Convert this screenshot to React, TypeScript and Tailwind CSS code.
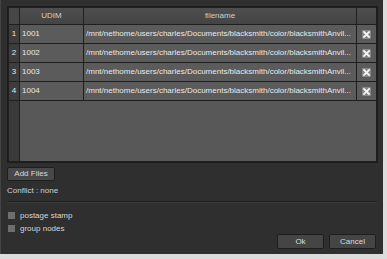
const rows = ["1001", "1002", "1003", "1004"];
const path = "/mnt/nethome/users/charles/Documents/blacksmith/color/blacksmithAnvil...";

function RemoveIcon() {
  return (
    <svg width="9" height="9" viewBox="0 0 9 9">
      <rect x="0" y="0" width="9" height="9" rx="1" fill="#858585" />
      <path d="M2 2 L7 7 M7 2 L2 7" stroke="#f4f4f4" strokeWidth="1.8" strokeLinecap="square" />
    </svg>
  );
}

export default function App() {
  return (
    <div
      className="w-[387px] h-[259px] bg-[#dcdcdc] overflow-hidden text-[8px] text-[#d6d6d6]"
      style={{ fontFamily: '"Liberation Sans", Arial, sans-serif' }}
    >
      <div className="w-[383px] h-[254px] bg-[#2f2f2f] border-l border-[#444] flex flex-col px-[6px] pt-[6px]">
        {/* table */}
        <div className="w-[371px] h-[157px] border border-[#1c1c1c] bg-[#1f1f1f] flex flex-col p-px gap-px">
          <div className="flex h-[16px] gap-px">
            <div className="w-[10px] bg-[#474747]" />
            <div className="w-[63px] bg-gradient-to-b from-[#4e4e4e] to-[#444] flex items-center justify-center text-[#cfcfcf]">UDIM</div>
            <div className="flex-1 bg-gradient-to-b from-[#4e4e4e] to-[#444] flex items-center justify-center text-[#cfcfcf]">filename</div>
            <div className="w-[19px] bg-gradient-to-b from-[#4e4e4e] to-[#444]" />
          </div>
          {rows.map((u, i) => (
            <div key={u} className="flex h-[18px] gap-px">
              <div className="w-[10px] bg-[#3d3d3d] flex items-center justify-center text-[#e6e6e6]">{i + 1}</div>
              <div className="w-[63px] bg-[#5b5b5b] flex items-center pl-[2px] text-[#e8e8e8]">{u}</div>
              <div className="flex-1 min-w-0 bg-[#5b5b5b] flex items-center pl-[2px] text-[#e8e8e8] whitespace-nowrap">
                {path}
              </div>
              <div className="w-[19px] bg-[#5b5b5b] flex items-center justify-center">
                <RemoveIcon />
              </div>
            </div>
          ))}
          <div className="flex flex-1 gap-px">
            <div className="w-[10px] bg-[#3a3a3a]" />
            <div className="flex-1 bg-[#585858]" />
          </div>
        </div>

        <button className="mt-[4px] w-[48px] h-[14px] bg-[#484848] border border-[#1e1e1e] rounded-[2px] text-[#d8d8d8] flex items-center justify-center">
          Add Files
        </button>
        <div className="mt-[4px] h-[11px] flex items-center text-[#d0d0d0]">Conflict : none</div>
        <div className="mt-[5px] w-[370px] border-t border-[#1e1e1e] border-b-[#3a3a3a] border-b" />

        <div className="mt-[8px] flex flex-col gap-[4px]">
          <label className="flex items-center gap-[5px] h-[9px]">
            <span className="w-[7px] h-[7px] bg-[#6e6e6e] ml-px" />
            postage stamp
          </label>
          <label className="flex items-center gap-[5px] h-[9px]">
            <span className="w-[7px] h-[7px] bg-[#6e6e6e] ml-px" />
            group nodes
          </label>
        </div>

        <div className="mt-auto mb-[5px] flex justify-end gap-[5px] pr-[1px]">
          <button className="w-[47px] h-[15px] bg-[#454545] border border-[#1e1e1e] rounded-[2px] text-[#dcdcdc]">Ok</button>
          <button className="w-[47px] h-[15px] bg-[#454545] border border-[#1e1e1e] rounded-[2px] text-[#dcdcdc]">Cancel</button>
        </div>
      </div>
    </div>
  );
}
